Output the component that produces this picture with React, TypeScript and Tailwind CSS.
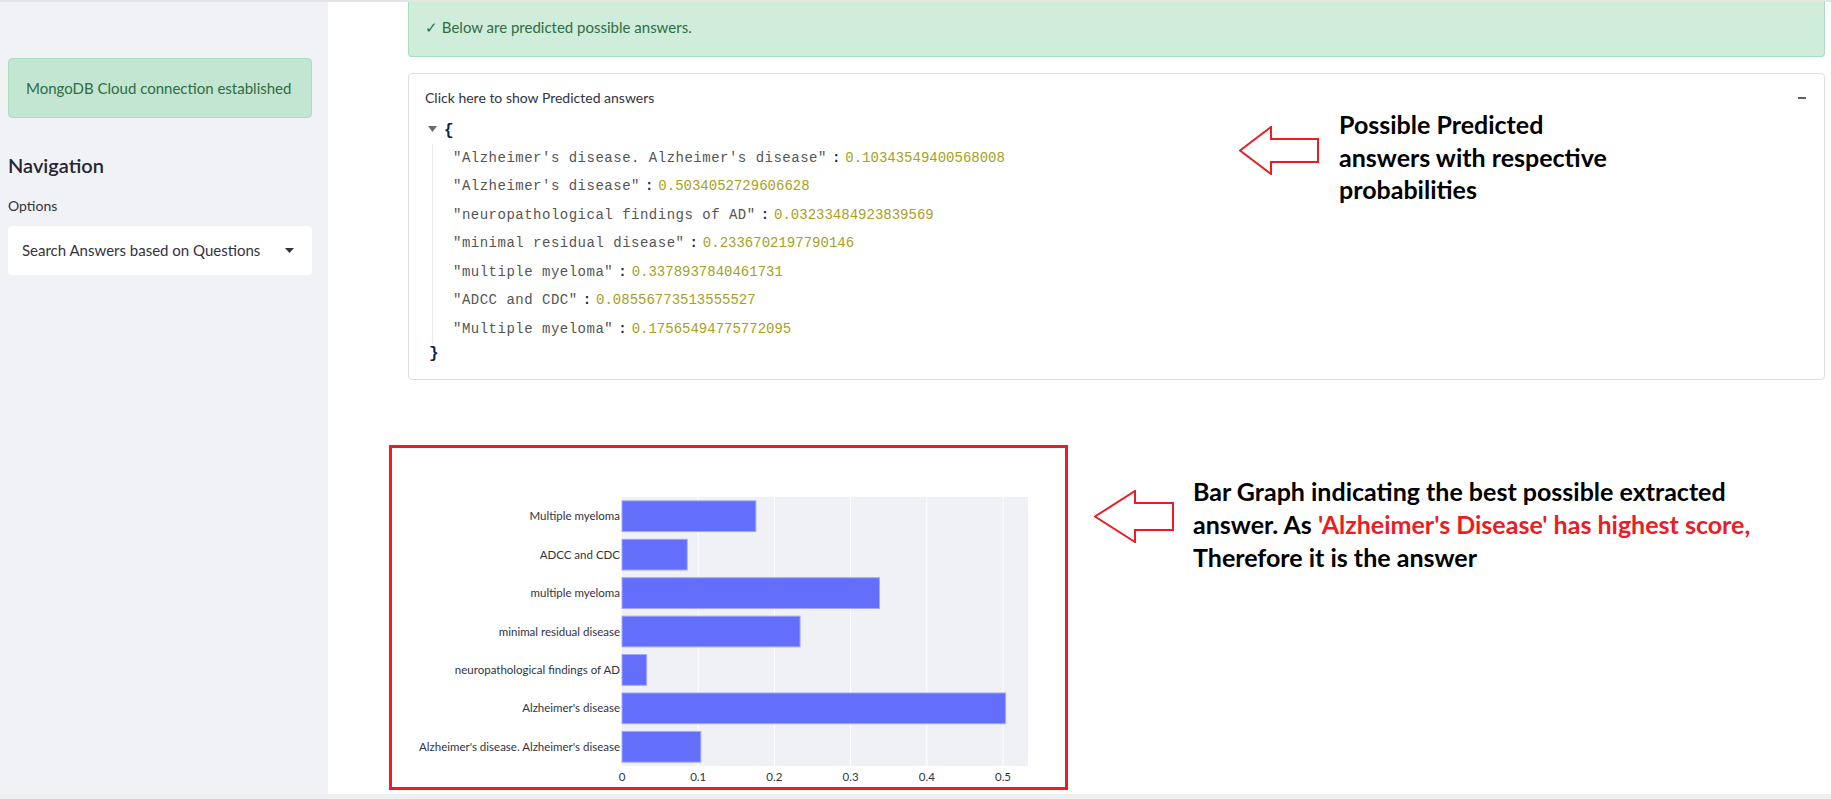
import React from 'react';

const answers: [string, string][] = [
  ["Alzheimer's disease. Alzheimer's disease", '0.10343549400568008'],
  ["Alzheimer's disease", '0.5034052729606628'],
  ['neuropathological findings of AD', '0.03233484923839569'],
  ['minimal residual disease', '0.2336702197790146'],
  ['multiple myeloma', '0.3378937840461731'],
  ['ADCC and CDC', '0.08556773513555527'],
  ['Multiple myeloma', '0.17565494775772095'],
];

// plotly draws the last category on top
const bars = [...answers].reverse().map(([label, v]) => ({ label, value: parseFloat(v) }));

function SuccessBox({ text, className }: { text: string; className: string }) {
  return (
    <div className={`flex items-center whitespace-nowrap border border-[#a9dfbd] text-[15px] text-[#2f6c42] ${className}`}>
      {text}
    </div>
  );
}

function HollowArrow({ w, h, head, top, bottom }: { w: number; h: number; head: number; top: number; bottom: number }) {
  const mid = h / 2;
  const pts = `1,${mid} ${head},1 ${head},${top} ${w - 1},${top} ${w - 1},${bottom} ${head},${bottom} ${head},${h - 1}`;
  return (
    <svg width={w} height={h} viewBox={`0 0 ${w} ${h}`} className="block flex-none">
      <polygon points={pts} fill="white" stroke="#ed1c24" strokeWidth={2} />
    </svg>
  );
}

function BarChart() {
  const W = 673;
  const H = 339;
  const left = 230;
  const top = 49;
  const pw = 406;
  const ph = 269;
  const scale = 762;
  const band = ph / bars.length;
  const ticks = [0, 0.1, 0.2, 0.3, 0.4, 0.5];
  return (
    <svg width={W} height={H} viewBox={`0 0 ${W} ${H}`} className="block">
      <rect x={left} y={top} width={pw} height={ph} fill="#eff1f5" />
      {ticks.slice(1).map((t) => (
        <line key={t} x1={left + t * scale} x2={left + t * scale} y1={top} y2={top + ph} stroke="#ffffff" strokeWidth={1} />
      ))}
      {bars.map((b, i) => {
        const y = top + i * band + band * 0.1;
        return (
          <g key={b.label}>
            <rect x={left} y={y} width={b.value * scale} height={band * 0.8} fill="#636efa" stroke="#a3a9fb" strokeWidth={1} />
            <text
              x={left - 2}
              y={y + band * 0.4 + 4}
              textAnchor="end"
              fontSize={11.5}
              fontFamily="Lato, 'Noto Sans', sans-serif"
              fill="#31333f"
            >
              {b.label}
            </text>
          </g>
        );
      })}
      {ticks.map((t) => (
        <text
          key={t}
          x={left + t * scale}
          y={top + ph + 15}
          textAnchor="middle"
          fontSize={11.5}
          fontFamily="Lato, 'Noto Sans', sans-serif"
          fill="#31333f"
        >
          {t}
        </text>
      ))}
    </svg>
  );
}

export default function App() {
  return (
    <div className="flex h-[799px] w-full flex-col overflow-hidden bg-white font-['Lato','Noto_Sans',sans-serif] text-[#31333f]">
      <div className="h-[2px] flex-none bg-[#e4e4e4]" />
      <div className="flex min-h-0 flex-1">
        {/* Sidebar */}
        <aside className="w-[328px] flex-none bg-[#f0f2f6] pl-[8px] pr-[16px] pt-[56px]">
          <SuccessBox text="MongoDB Cloud connection established" className="h-[60px] rounded-[4px] bg-[#c3e6d2] px-[17px]" />
          <h2 className="mt-[33px] text-[20px] font-semibold leading-[28px] text-[#262730]">Navigation</h2>
          <div className="mt-[17px] text-[14px] leading-[20px] text-[#31333f]">Options</div>
          <div className="mt-[10px] flex h-[49px] items-center justify-between rounded-[4px] bg-white pl-[14px] pr-[18px] text-[15px] text-[#31333f]">
            <span className="whitespace-nowrap">Search Answers based on Questions</span>
            <svg width="9" height="5" viewBox="0 0 9 5" className="block flex-none">
              <polygon points="0,0 9,0 4.5,5" fill="#31333f" />
            </svg>
          </div>
        </aside>

        {/* Main */}
        <main className="min-w-0 flex-1 pl-[61px] pr-[6px]">
          <div className="ml-[19px]">
            <SuccessBox
              text="✓ Below are predicted possible answers."
              className="h-[55px] rounded-b-[4px] border-t-0 bg-[#d0ecdb] px-[16px] pb-[4px]"
            />

            <div className="relative mt-[16px] h-[307px] rounded-[4px] border border-[#dedede] px-[16px] pt-[14px]">
              <div className="flex items-center justify-between text-[14px] leading-[20px] text-[#31333f]">
                <span>Click here to show Predicted answers</span>
                <span className="mr-[2px] block h-[2px] w-[8px] bg-[#5e5e66]" />
              </div>

              <div className="font-['Liberation_Mono',monospace] text-[14px]">
                <div className="mt-[10px] flex h-[26px] items-center">
                  <svg width="9" height="6" viewBox="0 0 9 6" className="mb-[5px] ml-[3px] block">
                    <polygon points="0,0 9,0 4.5,6" fill="#6b6b6b" />
                  </svg>
                  <span className="ml-[7px] text-[16px] font-bold text-[#0b2550]">{'{'}</span>
                </div>
                <div className="ml-[7px] border-l border-[#ebebeb] pl-[20px]">
                  {answers.map(([k, v]) => (
                    <div key={k} className="flex h-[28.5px] items-center whitespace-pre">
                      <span className="tracking-[0.5px] text-[#555555]">"{k}"</span>
                      <span className="mx-[5px] font-bold text-[#1e2a44]">:</span>
                      <span className="text-[#a6a124]">{v}</span>
                    </div>
                  ))}
                </div>
                <div className="ml-[4px] h-[20px] text-[16px] font-bold leading-[20px] text-[#0b2550]">{'}'}</div>
              </div>

              {/* annotation over the expander */}
              <div className="absolute left-[830px] top-[52px]">
                <HollowArrow w={80} h={49} head={32} top={13} bottom={36} />
              </div>
              <div className="absolute left-[930px] top-[34px] text-[25px] font-bold leading-[32.5px] text-black">
                <div>Possible Predicted</div>
                <div>answers with respective</div>
                <div>probabilities</div>
              </div>
            </div>
          </div>

          {/* chart row */}
          <div className="mt-[65px] flex">
            <div className="h-[345px] w-[679px] flex-none border-[3px] border-[#ed1c24]">
              <BarChart />
            </div>
            <div className="ml-[26px] mt-[45px]">
              <HollowArrow w={80} h={53} head={41} top={13} bottom={40} />
            </div>
            <div className="ml-[19px] mt-[30px] whitespace-nowrap text-[25px] font-bold leading-[33px] text-black">
              <div>Bar Graph indicating the best possible extracted</div>
              <div>
                answer. As <span className="text-[#ed1c24]">'Alzheimer's Disease' has highest score,</span>
              </div>
              <div>Therefore it is the answer</div>
            </div>
          </div>
        </main>
      </div>
      <div className="h-[5px] flex-none bg-[#f0f0f0]" />
    </div>
  );
}
